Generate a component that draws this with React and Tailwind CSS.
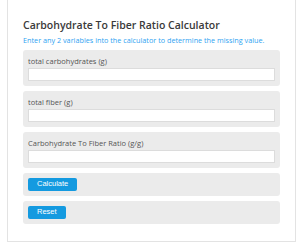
import React from 'react';

const fields = [
  'total carbohydrates (g)',
  'total fiber (g)',
  'Carbohydrate To Fiber Ratio (g/g)',
];

const Field = ({ label }) => (
  <div className="bg-[#ebebeb] rounded-[3px] p-[5px] leading-none">
    <div className="h-[12.5px] text-[7.5px] leading-[12px] text-[#555]">{label}</div>
    <input className="block w-full h-[13px] p-0 bg-white border border-[#dcdcdc] outline-none" />
  </div>
);

const Button = ({ children }) => (
  <div className="bg-[#ebebeb] rounded-[3px] p-[5px] leading-none">
    <button className="block h-[12.5px] px-[9px] rounded-[2px] bg-[#149ae0] text-white text-[7.5px] leading-[12px]" style={{ fontFamily: '"Liberation Sans", Arial, sans-serif' }}>
      {children}
    </button>
  </div>
);

export default function App() {
  return (
    <div className="w-[300px] h-[245px] bg-white" style={{ fontFamily: '"Open Sans", sans-serif' }}>
      <div className="ml-[7px] w-[289px] border-x border-b border-[#e3e3e3] px-[15px] pt-[18px] pb-[17.5px]">
        <h1 className="text-[10.5px] leading-[14px] font-semibold text-[#3a3a3a]">
          Carbohydrate To Fiber Ratio Calculator
        </h1>
        <p className="mt-[3px] text-[7.25px] leading-[11px] text-[#2ea3f2] whitespace-nowrap">
          Enter any 2 variables into the calculator to determine the missing value.
        </p>
        <div className="mt-[4px] flex flex-col gap-[5.5px]">
          {fields.map((f) => (
            <Field key={f} label={f} />
          ))}
          <Button>Calculate</Button>
          <Button>Reset</Button>
        </div>
      </div>
    </div>
  );
}
